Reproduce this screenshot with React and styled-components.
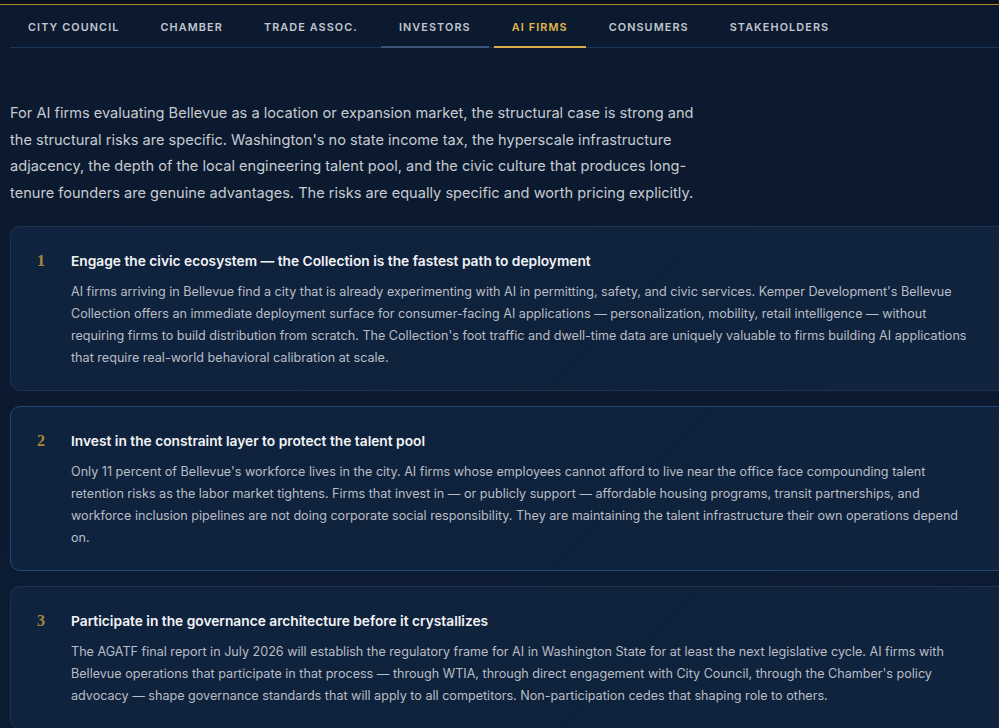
import React from "react"
import styled, { createGlobalStyle } from "styled-components"

const GlobalStyle = createGlobalStyle`
  html, body {
    margin: 0;
    padding: 0;
    background: #0b1729;
    overflow: hidden;
  }
  body {
    font-family: 'Inter', 'Noto Sans', sans-serif;
    -webkit-font-smoothing: antialiased;
  }
`

const TopStrip = styled.div`
  height: 4px;
  background: #0a111d;
  border-bottom: 1px solid #b28a2e;
`

const Page = styled.main`
  width: 1010px;
  min-height: 723px;
  padding-left: 10px;
  background: linear-gradient(180deg, #0c1a2f 0%, #0b1a2f 50%, #0c1c33 100%);
`

const Tabs = styled.nav`
  display: flex;
  gap: 5px;
  border-bottom: 1px solid #1a3556;
`

const Tab = styled.button`
  background: none;
  border: none;
  padding: 16px 18px 12px;
  margin-bottom: -1px;
  font-family: 'Inter', sans-serif;
  font-size: 10.8px;
  font-weight: 600;
  letter-spacing: 1.12px;
  text-transform: uppercase;
  color: ${p => (p.$active ? "#e3b94a" : "#c3c7ce")};
  border-bottom: 2px solid ${p => (p.$active ? "#d9ae45" : p.$hover ? "#3c5578" : "transparent")};
  cursor: pointer;
`

const Intro = styled.p`
  max-width: 690px;
  margin: 0;
  padding: 52px 0 19px;
  font-size: 14.6px;
  line-height: 26.7px;
  color: #c7cbd2;
`

const List = styled.div`
  display: flex;
  flex-direction: column;
  gap: 15px;
`

const Card = styled.section`
  display: grid;
  grid-template-columns: 34px 1fr;
  padding: 24px 40px 21px 26px;
  border-radius: 10px;
  border: 1px solid ${p => (p.$hover ? "#1e4878" : "#1e3250")};
  background: linear-gradient(135deg, #10233e 0%, #0f223c 60%, #10243f 100%);
`

const Num = styled.span`
  font-family: 'Liberation Serif', 'DejaVu Serif', serif;
  font-weight: 700;
  font-size: 16px;
  line-height: 20px;
  color: #a9873b;
`

const Title = styled.h3`
  margin: 0 0 10px;
  font-size: 13.75px;
  line-height: 20px;
  font-weight: 600;
  color: #f2f3f5;
`

const Body = styled.p`
  margin: 0;
  font-size: 12.6px;
  line-height: 22px;
  color: #b9bdc5;
`

const tabs = ["City Council", "Chamber", "Trade Assoc.", "Investors", "AI Firms", "Consumers", "Stakeholders"]

const items = [
  {
    title: "Engage the civic ecosystem — the Collection is the fastest path to deployment",
    text: "AI firms arriving in Bellevue find a city that is already experimenting with AI in permitting, safety, and civic services. Kemper Development's Bellevue Collection offers an immediate deployment surface for consumer-facing AI applications — personalization, mobility, retail intelligence — without requiring firms to build distribution from scratch. The Collection's foot traffic and dwell-time data are uniquely valuable to firms building AI applications that require real-world behavioral calibration at scale.",
  },
  {
    title: "Invest in the constraint layer to protect the talent pool",
    text: "Only 11 percent of Bellevue's workforce lives in the city. AI firms whose employees cannot afford to live near the office face compounding talent retention risks as the labor market tightens. Firms that invest in — or publicly support — affordable housing programs, transit partnerships, and workforce inclusion pipelines are not doing corporate social responsibility. They are maintaining the talent infrastructure their own operations depend on.",
    hover: true,
  },
  {
    title: "Participate in the governance architecture before it crystallizes",
    text: "The AGATF final report in July 2026 will establish the regulatory frame for AI in Washington State for at least the next legislative cycle. AI firms with Bellevue operations that participate in that process — through WTIA, through direct engagement with City Council, through the Chamber's policy advocacy — shape governance standards that will apply to all competitors. Non-participation cedes that shaping role to others.",
  },
]

const App = () => (
  <>
    <GlobalStyle />
    <TopStrip />
    <Page>
      <Tabs>
        {tabs.map(t => (
          <Tab key={t} $active={t === "AI Firms"} $hover={t === "Investors"}>{t}</Tab>
        ))}
      </Tabs>

      <Intro>
        For AI firms evaluating Bellevue as a location or expansion market, the structural case is strong and
        the structural risks are specific. Washington's no state income tax, the hyperscale infrastructure
        adjacency, the depth of the local engineering talent pool, and the civic culture that produces long-tenure
        founders are genuine advantages. The risks are equally specific and worth pricing explicitly.
      </Intro>

      <List>
        {items.map((it, i) => (
          <Card key={i} $hover={it.hover}>
            <Num>{i + 1}</Num>
            <div>
              <Title>{it.title}</Title>
              <Body>{it.text}</Body>
            </div>
          </Card>
        ))}
      </List>
    </Page>
  </>
)

export default App
